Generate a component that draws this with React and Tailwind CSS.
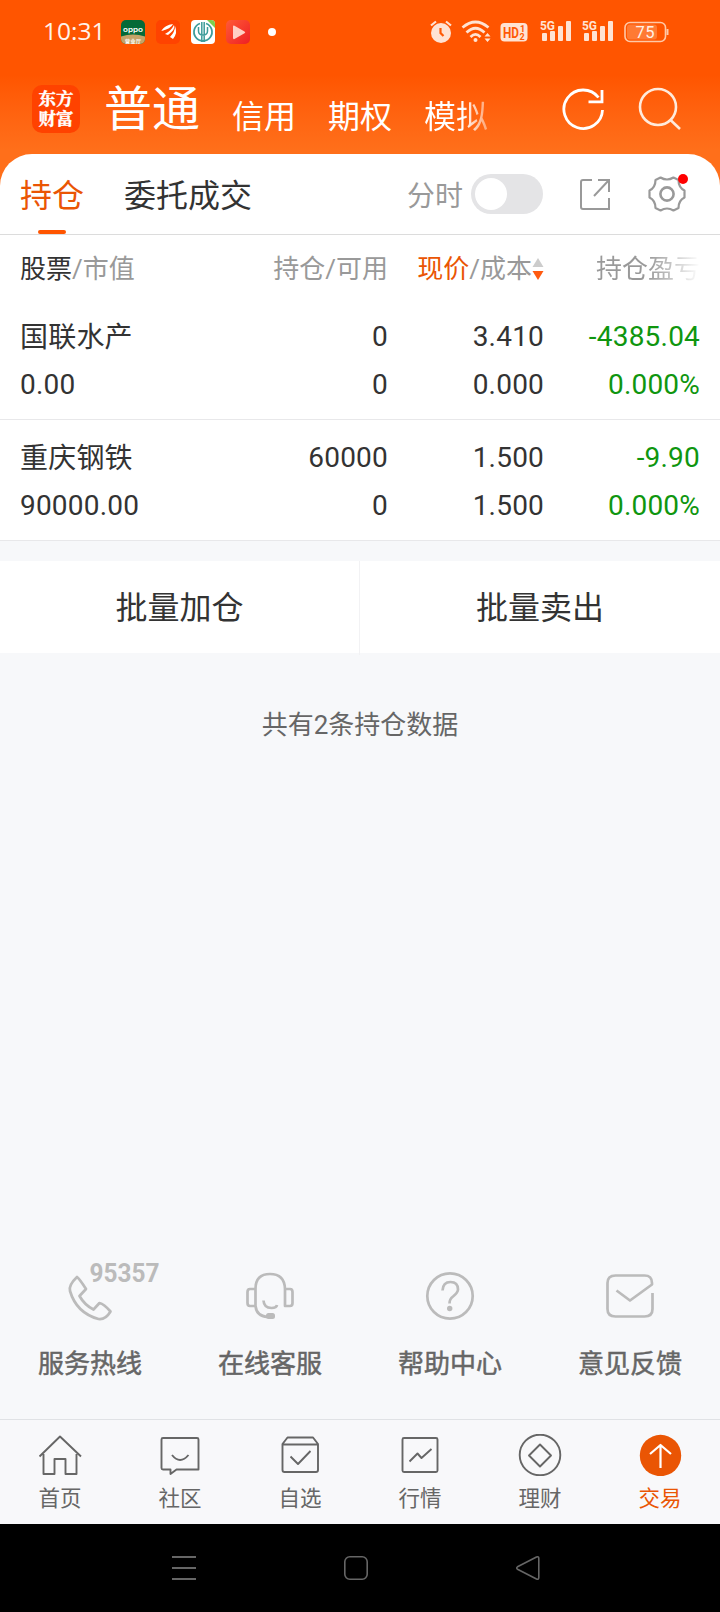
const holdings = [
  { name: "国联水产", value: "0.00", total: "0", usable: "0", price: "3.410", cost: "0.000", profit: "-4385.04", rate: "0.000%" },
  { name: "重庆钢铁", value: "90000.00", total: "60000", usable: "0", price: "1.500", cost: "1.500", profit: "-9.90", rate: "0.000%" },
];

const Signal = () => (
  <svg className="h-6 w-8" viewBox="0 0 32 24" fill="#ffe3d3">
    <text x="0" y="9.5" fontSize="12" fontWeight="700" fontFamily="Roboto, sans-serif" textLength="15" lengthAdjust="spacingAndGlyphs">5G</text>
    <rect x="2" y="13" width="5" height="8" rx="1" />
    <rect x="10" y="11" width="5" height="10" rx="1" />
    <rect x="18" y="6" width="5" height="15" rx="1" />
    <rect x="26" y="1" width="5" height="20" rx="1" />
  </svg>
);

const StatusBar = () => (
  <div className="flex h-16 items-center pl-[43px] pr-[51px]">
    <span className="mb-0.5 w-[60px] font-['Open_Sans',sans-serif] text-[24.5px] font-medium leading-8 text-[#fff3ea]">10:31</span>
    <div className="ml-[18px] flex items-center gap-[11px]">
      <svg className="size-6" viewBox="0 0 24 24">
        <rect width="24" height="24" rx="5" fill="#046a38" />
        <path d="M0 16.500Q12 12.500 24 16.500V19a5 5 0 0 1-5 5H5a5 5 0 0 1-5-5z" fill="#c5a468" />
        <text x="2" y="11.500" fontSize="6.5" fontWeight="600" fill="#fff" fontFamily="Inter, sans-serif" textLength="20" lengthAdjust="spacingAndGlyphs">oppo</text>
        <text x="4" y="22.500" fontSize="5" fontWeight="700" fill="#fff" fontFamily="'Noto Sans CJK SC', sans-serif" textLength="16">营业厅</text>
      </svg>
      <svg className="size-6" viewBox="0 0 24 24">
        <rect width="24" height="24" rx="5" fill="#ff4300" />
        <path d="M5 11Q9 5 17 4Q15 9 5 11zM9 14Q15 11 18 5Q20 9 12 15zM14 17Q19 12 19 6Q22 13 17 19z" fill="#fff" />
      </svg>
      <svg className="size-6" viewBox="0 0 24 24" fill="none" stroke="#3d9c9a">
        <rect width="24" height="24" rx="4" fill="#fff" stroke="none" />
        <path d="M16 0h4a4 4 0 0 1 4 4v4z" fill="#7fce4c" stroke="none" />
        <path d="M9 3.500A9 9 0 1 0 15 3.500" strokeWidth="1.800" />
        <path d="M10.800 2v20M13.200 2v20M7.500 7v4q0 4 4.500 4t4.500-4V7" strokeWidth="1.500" />
      </svg>
      <svg className="size-6" viewBox="0 0 24 24">
        <defs>
          <linearGradient id="play" x1="0" y1="0" x2="1" y2="1">
            <stop offset="0" stopColor="#ff5a36" />
            <stop offset="1" stopColor="#ee1f24" />
          </linearGradient>
        </defs>
        <rect width="24" height="24" rx="5" fill="url(#play)" />
        <path d="M7 6.500Q7 5 8.500 5.800L18.500 11.500Q20 12.500 18.500 13.300L8.500 19Q7 19.500 7 18z" fill="#ffd0c4" />
      </svg>
    </div>
    <span className="ml-[18px] size-2 rounded-full bg-white" />

    <div className="ml-auto flex items-center">
      <svg className="h-6 w-[22px]" viewBox="0 0 22 24" fill="#ffe3d3">
        <circle cx="11" cy="13" r="10" />
        <path d="M1 5.500 6 1.500M21 5.500 16 1.500" stroke="#ffe3d3" strokeWidth="2.200" />
        <path d="M10.500 8v5l3 3" stroke="#ff5a05" strokeWidth="2.200" fill="none" />
      </svg>
      <svg className="ml-[9px] h-6 w-[31px]" viewBox="0 0 31 24" fill="none" stroke="#ffe3d3" strokeWidth="2.700">
        <path d="M1.500 7.500Q14.500-3.500 27.500 7.500M5.500 12.500Q14.500 4 23.500 12.500M9.500 17Q14.500 12 19.500 17" />
        <circle cx="14.500" cy="20" r="2" fill="#ffe3d3" stroke="none" />
        <path d="M23.500 16.500 26.500 13l3 3.500zM23.500 18.500l3 3.500 3-3.500z" fill="#ffe3d3" stroke="none" />
      </svg>
      <svg className="ml-2 h-6 w-7" viewBox="0 0 28 24">
        <rect x="0.500" y="3" width="27" height="18.500" rx="4" fill="#ffe3d3" />
        <text x="3" y="17.500" fontSize="14" fontWeight="700" fill="#ff5a05" fontFamily="Roboto, sans-serif" textLength="16" lengthAdjust="spacingAndGlyphs">HD</text>
        <text x="20" y="12" fontSize="9" fontWeight="700" fill="#ff5a05" fontFamily="Roboto, sans-serif">1</text>
        <text x="19.500" y="20" fontSize="9" fontWeight="700" fill="#ff5a05" fontFamily="Roboto, sans-serif">2</text>
      </svg>
      <div className="ml-3 flex gap-2.5">
        <Signal />
        <Signal />
      </div>
      <svg className="ml-2.5 h-6 w-[45px]" viewBox="0 0 45 24">
        <rect x="1" y="2.500" width="40.500" height="19" rx="5" fill="none" stroke="#ffc9a8" strokeWidth="1.600" />
        <rect x="3" y="4.500" width="30" height="15" rx="3" fill="#ff7a33" />
        <path d="M43.500 9v6" stroke="#ffc9a8" strokeWidth="2" />
        <text x="11.500" y="17.800" fontSize="16.500" fill="#fff0e6" fontFamily="Roboto, sans-serif" textLength="19">75</text>
      </svg>
    </div>
  </div>
);

const Header = () => (
  <div className="flex h-[90px] items-start pl-8 text-white">
    <div className="mt-[21px] size-12 rounded-[10px] bg-[#ff4200] pt-[3px] text-center font-['Noto_Serif_CJK_SC','Noto_Sans_CJK_SC',sans-serif] text-[17.5px] font-bold leading-[20px] [-webkit-text-stroke:0.4px_#fff]">
      东方<br />财富
    </div>
    <span className="ml-6 mt-[11px] text-[48px] leading-[70px]">普通</span>
    <div className="ml-8 mt-[29px] flex w-[262px] gap-8 overflow-hidden whitespace-nowrap text-[32px] leading-[48px]">
      <span>信用</span>
      <span>期权</span>
      <span className="bg-linear-to-r from-white from-60% to-white/40 bg-clip-text text-transparent">模拟</span>
    </div>
    <svg className="ml-[67px] mt-[23px] size-[44px]" viewBox="0 0 44 44" fill="none" stroke="#fff" strokeWidth="2.800">
      <path d="M41.500 23A19.300 19.300 0 1 1 37.500 10.500" />
      <path d="M41 3v11.800H27.500" />
    </svg>
    <svg className="ml-[33px] mt-[23px] size-[44px]" viewBox="0 0 44 44" fill="none" stroke="#ffeadb" strokeWidth="2.600">
      <circle cx="20" cy="20" r="18" />
      <path d="M32 32.500 42 42" />
    </svg>
  </div>
);

const Tabs = () => (
  <div className="flex h-[81px] items-center border-b border-[#dcdcdc] pl-5 pr-[33px]">
    <div className="flex h-20 flex-col items-center text-[32px] leading-[48px] text-[#ea5504]">
      <span className="mt-[18px]">持仓</span>
      <span className="mt-2.5 h-1 w-7 rounded-sm bg-[#ff5500]" />
    </div>
    <span className="ml-10 mt-1 text-[32px] leading-[48px] text-[#333]">委托成交</span>
    <span className="ml-auto mt-[5px] text-[28px] leading-10 text-[#999]">分时</span>
    <div className="ml-2 flex h-10 w-[72px] items-center rounded-full bg-[#e4e4e6] px-1">
      <span className="size-8 rounded-full bg-white" />
    </div>
    <svg className="ml-9 size-8" viewBox="0 0 32 32" fill="none" stroke="#999" strokeWidth="2">
      <path d="M13 2H4a2 2 0 0 0-2 2v25a2 2 0 0 0 2 2h26V20" />
      <path d="M19 2h11v12M30 2 15 18" />
    </svg>
    <div className="relative ml-9">
      <svg className="size-10" viewBox="0 0 40 40" fill="none" stroke="#999" strokeWidth="2.200" strokeLinejoin="round">
        <circle cx="20" cy="20" r="6.600" strokeWidth="2.600" />
        <path d="M13.500 3.500Q20 7.500 26.500 3.500L31.500 6Q31.500 13.500 37.500 16.500V23.500Q31.500 26.500 31.500 34L26.500 36.500Q20 32.500 13.500 36.500L8.500 34Q8.500 26.500 2.500 23.500V16.500Q8.500 13.500 8.500 6Z" />
      </svg>
      <span className="absolute right-[-1px] top-0 size-2.5 rounded-full bg-[#f00]" />
    </div>
  </div>
);

const Holdings = () => (
  <div className="bg-white text-[#333]">
    <div className="grid h-16 grid-cols-[200px_168px_156px_156px] items-center px-5 pt-[3px] text-[26px] leading-10 text-[#999]">
      <span><span className="text-[#333]">股票</span>/市值</span>
      <span className="text-right">持仓/可用</span>
      <div className="flex items-center justify-end">
        <span><span className="text-[#ea5504]">现价</span>/成本</span>
        <svg className="h-6 w-3" viewBox="0 0 12 24">
          <path d="M6 1 11.500 10H0.500z" fill="#ccc" />
          <path d="M6 23 11.500 14H0.500z" fill="#ff5a10" />
        </svg>
      </div>
      <span className="justify-self-end bg-linear-to-r from-[#999] from-50% to-white bg-clip-text text-transparent">持仓盈亏</span>
    </div>
    {
      holdings.map((item) => (
        <div key={item.name} className="grid h-[121px] grid-cols-[200px_168px_156px_156px] grid-rows-[48px_48px] border-b border-[#e8e8ea] px-5 pt-3.5 text-right text-[28px] leading-[48px] tracking-[0.2px]">
          <span className="pt-px text-left">{item.name}</span>
          <span>{item.total}</span>
          <span>{item.price}</span>
          <span className="text-[#0f960f]">{item.profit}</span>
          <span className="text-left">{item.value}</span>
          <span>{item.usable}</span>
          <span>{item.cost}</span>
          <span className="text-[#0f960f]">{item.rate}</span>
        </div>
      ))
    }
  </div>
);

const services = [
  {
    label: "服务热线",
    icon: (
      <>
        <path d="M11 5Q14 7.500 20 17L13.500 24Q18.500 33 27.500 37.500L33.500 31Q38 32 44.500 39.500Q39.500 48 32.500 47Q10.500 41 4 19Q2.500 13 11 5Z" />
        <text x="23.500" y="10" fontSize="25" fontWeight="700" fill="#bbb" stroke="none" fontFamily="Roboto, sans-serif" textLength="70" lengthAdjust="spacingAndGlyphs">95357</text>
      </>
    ),
  },
  {
    label: "在线客服",
    icon: (
      <>
        <path d="M9.500 34V17Q9.500 2 24 2t15 15v17h5q2.500 0 2.500-3v-11q0-3-2.500-3H39M9.500 17H4q-2.500 0-2.500 3v11q0 3 2.500 3h5.500q1 10 12 11" />
        <rect x="20" y="41" width="9" height="6" rx="2.500" fill="#bbb" stroke="none" />
        <path d="M17.500 28.500Q18 36 25.500 36q5 0 5.500-3" />
      </>
    ),
  },
  {
    label: "帮助中心",
    icon: (
      <>
        <circle cx="24" cy="24" r="22.700" />
        <path d="M16.500 18.500Q17 10 24.500 10T32 17.500Q32 20.500 27 24.500Q23.500 27 23.500 31.500" />
        <circle cx="23.700" cy="36.500" r="2.700" fill="#bbb" stroke="none" />
      </>
    ),
  },
  {
    label: "意见反馈",
    icon: <path d="M10.500 18.500 24 28.500 46 12.500V11Q46 3.500 38.500 3.500H9.500Q1.500 3.500 1.500 11V37Q1.500 44.500 9.500 44.500H38.500Q46.500 44.500 46.500 37V21" />,
  },
];

const Services = () => (
  <div className="mt-auto grid h-[147px] grid-cols-4">
    {
      services.map((item) => (
        <div key={item.label} className="flex flex-col items-center">
          <svg className="size-12 overflow-visible" viewBox="0 0 48 48" fill="none" stroke="#bbb" strokeWidth="2.700" strokeLinejoin="round">
            {item.icon}
          </svg>
          <span className="mt-6 text-[26px] leading-10 text-[#666] [-webkit-text-stroke:0.5px_#666]">{item.label}</span>
        </div>
      ))
    }
  </div>
);

const menu = [
  { label: "首页", icon: <path d="M1.500 22.500 22 2.500 43 22.500M5.500 20V40H16.500V25H27.500V40H38.500V20" /> },
  { label: "社区", icon: <path d="M5 4H39Q40.500 4 40.500 5.500V35.500H18.500L12.500 40V35.500H5Q3.500 35.500 3.500 34V5.500Q3.500 4 5 4ZM14 21Q22 31 30.500 21" /> },
  { label: "自选", icon: <path d="M9.500 3.500H35L40 10V36Q40 38 38 38H6.500Q4.500 38 4.500 36V10ZM4.500 10.500H40M12.500 22.500 20 30 32.500 17" /> },
  { label: "行情", icon: <path d="M6 4H38Q39.500 4 39.500 5.500V36.500Q39.500 38 38 38H6Q4.500 38 4.500 36.500V5.500Q4.500 4 6 4ZM11.500 27.500 19.500 19.500 23.500 24 33.500 15" /> },
  { label: "理财", icon: <><circle cx="22" cy="21" r="20.300" /><path d="M22 10.500 33 21.500 22 32.500 11 21.500Z" /></> },
  { label: "交易", active: true, icon: <><circle cx="22.500" cy="21.500" r="20.700" fill="#ea5504" stroke="none" /><path d="M22.500 34V11M12 20 22.500 11 33 20" stroke="#fff" strokeWidth="2.200" /></> },
];

const BottomMenu = () => (
  <div className="grid h-[105px] grid-cols-6 border-t border-[#e0e2e5] bg-[#f8f8fa]">
    {
      menu.map((item) => (
        <div key={item.label} className={item.active ? "flex flex-col items-center text-[#ea5504]" : "flex flex-col items-center text-[#666]"}>
          <svg className="mt-[14px] h-[42px] w-11" viewBox="0 0 44 42" fill="none" stroke="#666" strokeWidth="1.900" strokeLinejoin="round">
            {item.icon}
          </svg>
          <span className="mt-[7px] text-[21.5px] leading-8">{item.label}</span>
        </div>
      ))
    }
  </div>
);

const SystemNav = () => (
  <div className="flex h-[88px] items-center gap-[148px] bg-black pl-[172px]">
    <svg className="size-6" viewBox="0 0 24 24" stroke="#666" strokeWidth="1.800">
      <path d="M0 1h24M0 12h24M0 23h24" />
    </svg>
    <svg className="size-6" viewBox="0 0 24 24" fill="none" stroke="#666" strokeWidth="1.600">
      <rect x="0.800" y="0.800" width="22.400" height="22.400" rx="5" />
    </svg>
    <svg className="size-6" viewBox="0 0 24 24" fill="none" stroke="#666" strokeWidth="1.600" strokeLinejoin="round">
      <path d="M1.500 10.800 20.500 1Q22.800 0.300 22.800 2.500V21.500Q22.800 23.700 20.500 23L1.500 13.200Q0 12 1.500 10.800Z" />
    </svg>
  </div>
);

const App = () => {
  return (
    <div className="flex h-[1612px] w-[720px] flex-col overflow-hidden bg-[#f7f8fa] font-[Roboto,'Noto_Sans_CJK_SC',sans-serif]">
      <div className="bg-linear-to-b from-[#ff5500] from-[32%] to-[#ff6f1a] to-[64%]">
        <StatusBar />
        <Header />
        <div className="rounded-t-[32px] bg-white">
          <Tabs />
        </div>
      </div>
      <Holdings />
      <div className="mt-5 grid h-[92px] grid-cols-2 bg-white text-center text-[32px] leading-[94px] text-[#333]">
        <span className="border-r border-[#f2f2f4]">批量加仓</span>
        <span>批量卖出</span>
      </div>
      <p className="mt-[52px] text-center text-[26px] leading-10 text-[#666]">共有2条持仓数据</p>
      <Services />
      <BottomMenu />
      <SystemNav />
    </div>
  );
};

export default App;
